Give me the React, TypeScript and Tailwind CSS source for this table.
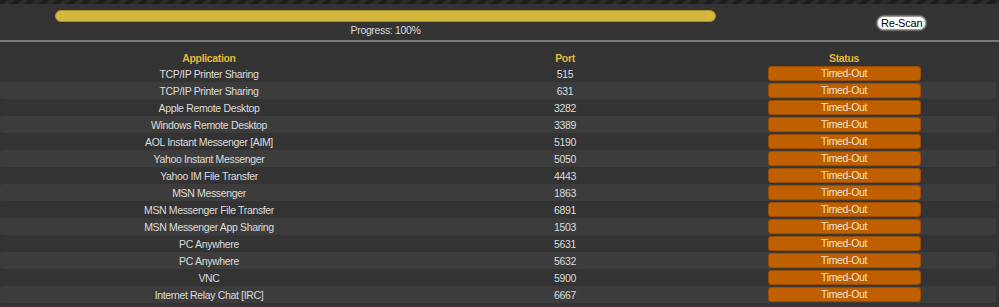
const rows: [string, number][] = [
  ["TCP/IP Printer Sharing", 515],
  ["TCP/IP Printer Sharing", 631],
  ["Apple Remote Desktop", 3282],
  ["Windows Remote Desktop", 3389],
  ["AOL Instant Messenger [AIM]", 5190],
  ["Yahoo Instant Messenger", 5050],
  ["Yahoo IM File Transfer", 4443],
  ["MSN Messenger", 1863],
  ["MSN Messenger File Transfer", 6891],
  ["MSN Messenger App Sharing", 1503],
  ["PC Anywhere", 5631],
  ["PC Anywhere", 5632],
  ["VNC", 5900],
  ["Internet Relay Chat [IRC]", 6667],
]

export default function App() {
  return (
    <div className="w-[999px] h-[307px] overflow-hidden bg-[#333333] text-[10.5px] tracking-[-0.35px] text-[#dddddd] font-['Liberation_Sans',Arial,sans-serif]">
      <div className="h-[4px] bg-[repeating-linear-gradient(135deg,#1e1e1e_0_5px,#2a2a2a_5px_10px)]" />

      <div className="flex h-[36px]">
        <div className="w-[661px] ml-[55px] flex flex-col">
          <div className="mt-[6px] h-[12px] rounded-full bg-[#d6b83e] border border-[#a88f2c]" />
          <div className="text-center leading-[13px] mt-[2px]">Progress: 100%</div>
        </div>
        <div className="ml-[161px] mt-[12px]">
          <button className="h-[14px] px-[3px] rounded-full bg-white border border-[#999] text-black text-[11px] tracking-[-0.2px] leading-[12px] shadow-[0_0_2px_#fff]">
            Re-Scan
          </button>
        </div>
      </div>

      <div className="h-[2px] bg-[#777777]" />

      <div className="mt-[7px] w-[996px]">
        <div className="grid grid-cols-[418px_294px_264px_1fr] h-[16px] items-center font-bold text-[#e2b93b]">
          <div className="text-center leading-[13px] pt-[2px]">Application</div>
          <div className="text-center leading-[13px] pt-[2px]">Port</div>
          <div className="text-center leading-[13px] pt-[2px]">Status</div>
          <div />
        </div>
        {rows.map(([app, port], i) => (
          <div
            key={i}
            className={`grid grid-cols-[418px_294px_264px_1fr] h-[17px] items-center rounded-[3px] ${i % 2 === 1 ? "bg-[#3c3c3c]" : ""}`}
          >
            <div className="text-center pt-[2px]">{app}</div>
            <div className="text-center pt-[2px]">{port}</div>
            <div className="flex justify-center">
              <div className="w-[153px] h-[15px] rounded-[3px] bg-[#c05f00] border border-[#9a4c00] text-center leading-[13px] text-[#ebe3da]">
                Timed-Out
              </div>
            </div>
            <div />
          </div>
        ))}
      </div>
    </div>
  )
}
